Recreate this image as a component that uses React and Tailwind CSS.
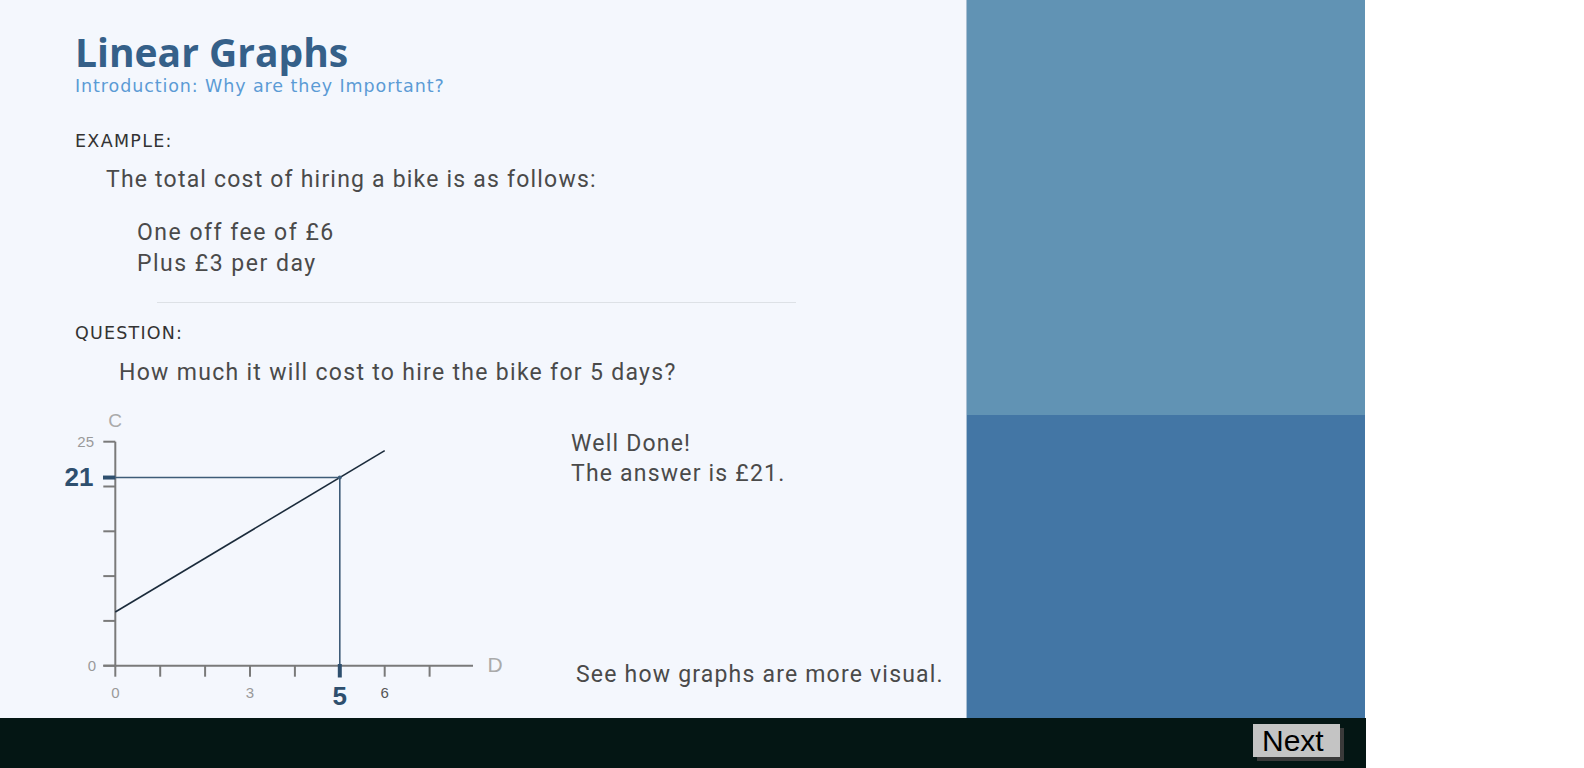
import React from 'react'

const xs = (d) => 65.3 + d * 44.9
const ys = (c) => 265.7 - c * 8.96

function Graph() {
  const yTicks = [0, 5, 10, 15, 20, 25]
  const xTicks = [0, 1, 2, 3, 4, 5, 6, 7]
  return (
    <svg width="460" height="310" viewBox="0 0 460 310" className="block shrink-0">
      {/* axes */}
      <line x1={65.3} y1={41.7} x2={65.3} y2={266.7} stroke="#7a7a7a" strokeWidth="2" />
      <line x1={53.3} y1={265.7} x2={423} y2={265.7} stroke="#7a7a7a" strokeWidth="2" />
      {yTicks.map((c) => (
        <line key={'y' + c} x1={53.3} y1={ys(c)} x2={65.3} y2={ys(c)} stroke="#7a7a7a" strokeWidth="2" />
      ))}
      {xTicks.map((d) => (
        <line key={'x' + d} x1={xs(d)} y1={265.7} x2={xs(d)} y2={276.7} stroke="#7a7a7a" strokeWidth="2" />
      ))}

      {/* cost line */}
      <line x1={xs(0)} y1={ys(6)} x2={xs(6)} y2={ys(24)} stroke="#1b2b3b" strokeWidth="1.6" />

      {/* guides */}
      <line x1={65.3} y1={ys(21)} x2={xs(5)} y2={ys(21)} stroke="#3e5c78" strokeWidth="1.6" />
      <line x1={xs(5)} y1={ys(21)} x2={xs(5)} y2={265.7} stroke="#3e5c78" strokeWidth="1.6" />
      <line x1={53} y1={ys(21)} x2={65.3} y2={ys(21)} stroke="#2e4f6e" strokeWidth="4" />
      <line x1={xs(5)} y1={264} x2={xs(5)} y2={277.5} stroke="#2e4f6e" strokeWidth="4" />
      <circle cx={xs(5)} cy={ys(21)} r="2" fill="#3e5c78" />

      {/* labels */}
      <g fontFamily="'Liberation Sans', Arial, sans-serif">
        <text x={65} y={27} fontSize="19" fill="#aaaaaa" textAnchor="middle">C</text>
        <text x={445} y={272} fontSize="21" fill="#aaaaaa" textAnchor="middle">D</text>
        <text x={44} y={47} fontSize="15" fill="#9a9a9a" textAnchor="end">25</text>
        <text x={46} y={271} fontSize="15" fill="#9a9a9a" textAnchor="end">0</text>
        <text x={43.5} y={86} fontSize="26" fontWeight="bold" fill="#2e4f6e" textAnchor="end">21</text>
        <text x={xs(0)} y={298} fontSize="15" fill="#9a9a9a" textAnchor="middle">0</text>
        <text x={xs(3)} y={298} fontSize="15" fill="#9a9a9a" textAnchor="middle">3</text>
        <text x={xs(5)} y={305} fontSize="26" fontWeight="bold" fill="#2e4f6e" textAnchor="middle">5</text>
        <text x={xs(6)} y={298} fontSize="15" fill="#555555" textAnchor="middle">6</text>
      </g>
    </svg>
  )
}

export default function App() {
  return (
    <div className="w-[1366px] h-[768px] flex flex-col font-['Roboto',sans-serif]">
      <div className="flex h-[718px]">
        {/* Lesson area */}
        <div className="w-[967px] shrink-0 bg-[#f4f7fd] border-r border-[#a9bfd3] pt-[30px]">
          <div className="pl-[75px]">
            <h1 className="font-['Open_Sans',sans-serif] font-bold text-[39px] leading-[44px] text-[#356089]">
              Linear Graphs
            </h1>
            <p className="font-['DejaVu_Sans',sans-serif] text-[17.5px] leading-[20px] text-[#5b9bd5] tracking-[0.9px] mt-[2px]">
              Introduction: Why are they Important?
            </p>

            <p className="font-['DejaVu_Sans',sans-serif] text-[17.5px] leading-[20px] text-[#333] tracking-[1.3px] mt-[35px]">
              EXAMPLE:
            </p>
            <p className="text-[23px] leading-[30px] text-[#4a4a4a] tracking-[1.2px] ml-[31px] mt-[14px]">
              The total cost of hiring a bike is as follows:
            </p>
            <div className="text-[23px] leading-[31px] text-[#4a4a4a] tracking-[1.5px] ml-[62px] mt-[22px]">
              <p>One off fee of £6</p>
              <p>Plus £3 per day</p>
            </div>
          </div>

          <div className="ml-[157px] w-[639px] h-px bg-[#dde1e6] mt-[23px]" />

          <div className="pl-[75px]">
            <p className="font-['DejaVu_Sans',sans-serif] text-[17.5px] leading-[20px] text-[#333] tracking-[1.2px] mt-[20px]">
              QUESTION:
            </p>
            <p className="text-[23px] leading-[30px] text-[#4a4a4a] tracking-[1.3px] ml-[44px] mt-[15px]">
              How much it will cost to hire the bike for 5 days?
            </p>
          </div>

          <div className="flex pl-[50px] mt-[12px]">
            <Graph />
            <div className="ml-[61px] flex flex-col h-[300px] text-[23px] leading-[30px] text-[#4a4a4a] tracking-[1.2px]">
              <div className="mt-[29px]">
                <p>Well Done!</p>
                <p>The answer is £21.</p>
              </div>
              <p className="mt-auto ml-[5px] mb-[10px]">See how graphs are more visual.</p>
            </div>
          </div>
        </div>

        {/* Side panel */}
        <div className="w-[398px] shrink-0 flex flex-col">
          <div className="h-[415px] bg-[#6193b4]" />
          <div className="flex-1 bg-[#4376a5]" />
        </div>
      </div>

      {/* Footer bar */}
      <div className="h-[50px] bg-[#041614] flex justify-end items-start pt-[6px] pr-[26px]">
        <button className="w-[87px] h-[33px] bg-[#c4c4c4] shadow-[4px_4px_0_#3a3a3a] text-black text-[30px] leading-[33px] font-['Liberation_Sans',Arial,sans-serif] text-left pl-[9px]">
          Next
        </button>
      </div>
    </div>
  )
}
